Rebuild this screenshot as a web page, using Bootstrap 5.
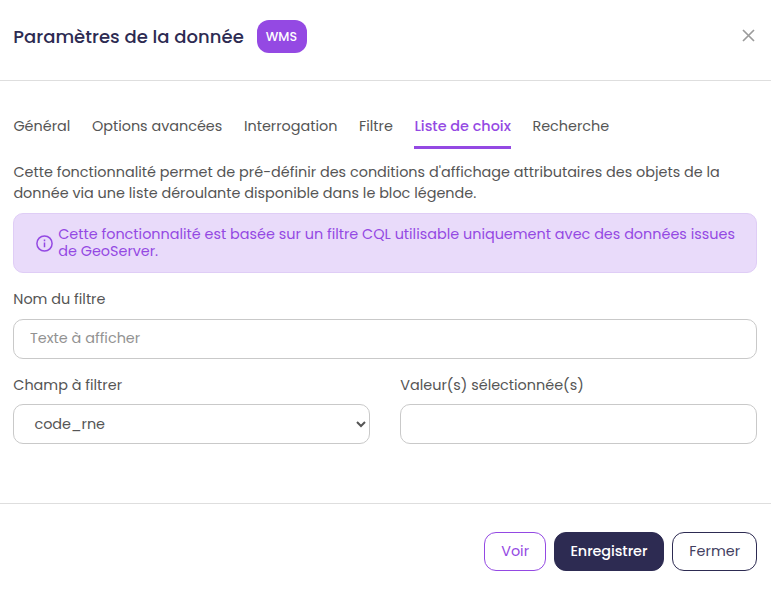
<!DOCTYPE html>
<html lang="fr">
<head>
<meta charset="utf-8">
<meta name="viewport" content="width=device-width, initial-scale=1">
<title>Paramètres de la donnée</title>
<link href="https://cdn.jsdelivr.net/npm/bootstrap@5.3.0/dist/css/bootstrap.min.css" rel="stylesheet">
<style>
:root{--violet:#9449e3;--navy:#2d2b52;--ink:#555}
body{font-family:Poppins,Inter,"Liberation Sans",sans-serif;font-size:14.4px;line-height:21.6px;color:var(--ink);background:#fff;overflow:hidden}
.dialog{height:594px}
.dialog-head{height:81px;padding:20px 16px 0 13.2px;border-bottom:1px solid #dedede}
.dialog-title{font-size:18px;line-height:33px;font-weight:500;color:var(--navy);letter-spacing:.04px}
.type-tag{width:50px;height:33px;border-radius:12px;background:var(--violet);color:#fff;font-size:12.6px;font-weight:500;margin-left:13px;padding-right:1px}
.close-x{width:13px;height:13px;margin-top:9px}
.dialog-main{padding:34px 14px 0 13px}
.tabs-line{gap:21.6px;padding-left:.4px}
.tabs-line .nav-link{padding:0 0 9px;line-height:22px;color:var(--ink);border-bottom:3px solid transparent;margin:0}
.tabs-line .nav-link.active{color:var(--violet);font-weight:500;border-color:var(--violet)}
.intro{margin:13px 0 9px;padding-left:.4px;line-height:21px}
.notice{height:60px;padding:0 16px 0 22px;border:1px solid #dfcdf6;border-radius:10px;background:#e9dbfa;color:var(--violet);line-height:17.28px;margin-bottom:15px}
.notice svg{width:17px;height:17px;margin-right:5.2px}
.form-label{margin-bottom:9px;line-height:22px;display:block;padding-left:.3px}
.form-control,.choice{height:40px;border:1px solid #c9c9c9;border-radius:10px;font-size:14.4px;color:var(--ink);padding:0 16px 2px}
.form-control::placeholder{color:#929292}
.choice{width:100%;padding:0 1px 0 16.4px;background:#fff}
.fields{--bs-gutter-x:30px;margin-top:15px}
.fields .form-label{margin-bottom:8px}
.dialog-foot{height:91px;border-top:1px solid #dedede;padding:28px 14px 0;gap:8px}
.dialog-foot .btn{height:39px;border-radius:12px;padding:0 16px;font-size:14.4px;line-height:37px}
.dialog-foot .btn-view{color:var(--violet);border-color:var(--violet);padding:0 16.4px 0 16px}
.dialog-foot .btn-save,.btn-save:hover{background:var(--navy);color:#fff;border-color:var(--navy);font-weight:500;letter-spacing:-.08px;padding:0 16px 0 15px}
.dialog-foot .btn-quit{color:#42405f;border-color:var(--navy)}
</style>
<script src="https://cdn.jsdelivr.net/npm/bootstrap@5.3.0/dist/js/bootstrap.bundle.min.js"></script>
</head>
<body>
<div class="dialog d-flex flex-column">
  <header class="dialog-head d-flex align-items-start">
    <h1 class="dialog-title mb-0">Paramètres de la donnée</h1>
    <span class="type-tag d-flex align-items-center justify-content-center">WMS</span>
    <button type="button" class="border-0 bg-transparent p-0 ms-auto d-flex" aria-label="Fermer">
      <svg class="close-x" viewBox="0 0 13 13" fill="none" stroke="#9b9b9b" stroke-width="1.7"><path d="M1 1l11 11M12 1L1 12"/></svg>
    </button>
  </header>
  <main class="dialog-main flex-grow-1">
    <nav class="nav tabs-line">
      <a class="nav-link" href="#">Général</a>
      <a class="nav-link" href="#">Options avancées</a>
      <a class="nav-link" href="#">Interrogation</a>
      <a class="nav-link" href="#">Filtre</a>
      <a class="nav-link active" href="#">Liste de choix</a>
      <a class="nav-link" href="#">Recherche</a>
    </nav>
    <p class="intro">Cette fonctionnalité permet de pré-définir des conditions d'affichage attributaires des objets de la donnée via une liste déroulante disponible dans le bloc légende.</p>
    <div class="notice d-flex align-items-center">
      <svg class="flex-shrink-0" viewBox="0 0 17 17" fill="none" stroke="currentColor" stroke-width="1.5"><circle cx="8.5" cy="8.5" r="7.6"/><path d="M8.5 7.5v4.8M8.5 4.6v1.6"/></svg>
      <div>Cette fonctionnalité est basée sur un filtre CQL utilisable uniquement avec des données issues de GeoServer.</div>
    </div>
    <label class="form-label" for="nom">Nom du filtre</label>
    <input id="nom" class="form-control" type="text" placeholder="Texte à afficher">
    <div class="row fields">
      <div class="col-6">
        <label class="form-label" for="champ">Champ à filtrer</label>
        <select id="champ" class="choice"><option>code_rne</option></select>
      </div>
      <div class="col-6">
        <label class="form-label" for="valeurs">Valeur(s) sélectionnée(s)</label>
        <input id="valeurs" class="form-control" type="text">
      </div>
    </div>
  </main>
  <footer class="dialog-foot d-flex justify-content-end">
    <button type="button" class="btn btn-view">Voir</button>
    <button type="button" class="btn btn-save">Enregistrer</button>
    <button type="button" class="btn btn-quit">Fermer</button>
  </footer>
</div>
</body>
</html>
